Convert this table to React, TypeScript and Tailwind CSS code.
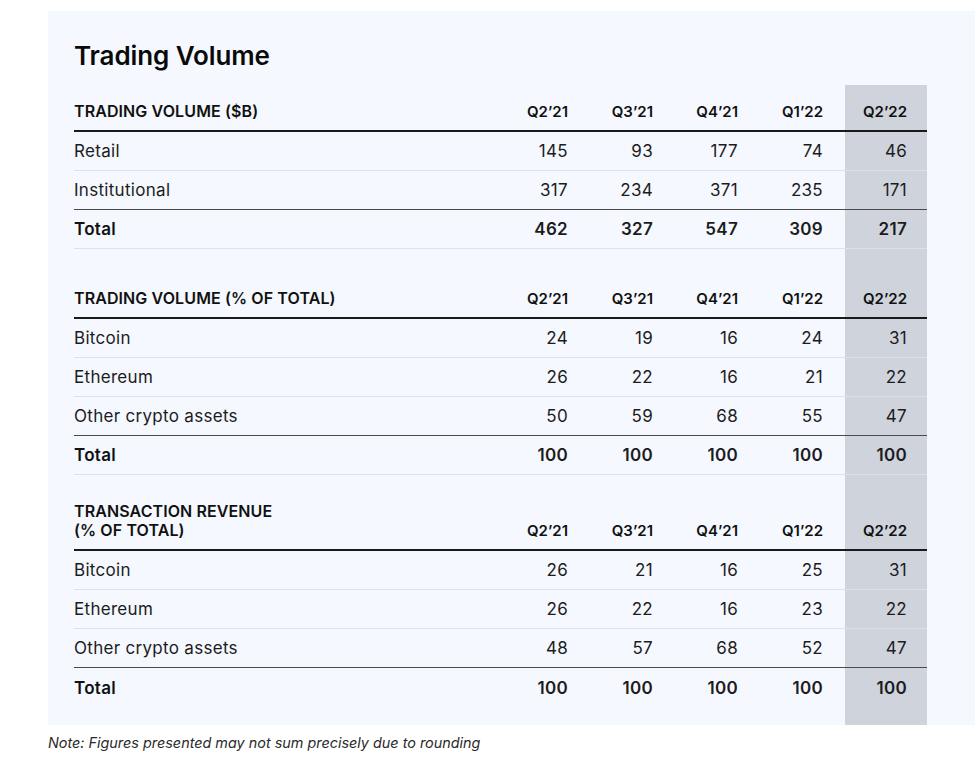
import React from 'react';

type Row = { label: string; values: string[]; total?: boolean; dark?: boolean; last?: boolean };

const quarters = ['Q2’21', 'Q3’21', 'Q4’21', 'Q1’22', 'Q2’22'];

const sections: { title: React.ReactNode; rows: Row[] }[] = [
    {
        title: 'TRADING VOLUME ($B)',
        rows: [
            { label: 'Retail', values: ['145', '93', '177', '74', '46'] },
            { label: 'Institutional', values: ['317', '234', '371', '235', '171'], dark: true },
            { label: 'Total', values: ['462', '327', '547', '309', '217'], total: true },
        ],
    },
    {
        title: 'TRADING VOLUME (% OF TOTAL)',
        rows: [
            { label: 'Bitcoin', values: ['24', '19', '16', '24', '31'] },
            { label: 'Ethereum', values: ['26', '22', '16', '21', '22'] },
            { label: 'Other crypto assets', values: ['50', '59', '68', '55', '47'], dark: true },
            { label: 'Total', values: ['100', '100', '100', '100', '100'], total: true },
        ],
    },
    {
        title: (
            <>
                TRANSACTION REVENUE
                <br />
                (% OF TOTAL)
            </>
        ),
        rows: [
            { label: 'Bitcoin', values: ['26', '21', '16', '25', '31'] },
            { label: 'Ethereum', values: ['26', '22', '16', '23', '22'] },
            { label: 'Other crypto assets', values: ['48', '57', '68', '52', '47'], dark: true },
            { label: 'Total', values: ['100', '100', '100', '100', '100'], total: true, last: true },
        ],
    },
];

function Cells({ values, bold }: { values: string[]; bold?: boolean }) {
    return (
        <>
            {values.slice(0, 4).map((v, i) => (
                <div key={i} className={`w-[85px] pt-[2px] text-right pr-[22px] ${bold ? 'font-semibold' : ''}`}>
                    {v}
                </div>
            ))}
            <div className={`w-[82px] self-stretch flex items-center justify-end pt-[2px] pr-[20px] bg-[#cfd3dc] ${bold ? 'font-semibold' : ''}`}>
                {values[4]}
            </div>
        </>
    );
}

function Spacer({ h }: { h: string }) {
    return (
        <div className={`flex ${h}`}>
            <div className="flex-1" />
            <div className="w-[82px] bg-[#cfd3dc]" />
        </div>
    );
}

export default function App() {
    return (
        <div className="w-[975px] h-[758px] bg-white font-['Inter','Liberation_Sans',sans-serif] text-[#1c1c1c]">
            <div className="pt-[11px] pl-[48px]">
                <div className="bg-[#f5f8fe] pl-[26px] pr-[48px]">
                    <h1 className="pt-[29px] h-[74px] text-[26px] leading-[32px] font-semibold text-[#0a0a0a] tracking-[-0.1px]">
                        Trading Volume
                    </h1>
                    <div className="flex flex-col text-[17px] tracking-[0.3px]">
                        {sections.map((s, si) => (
                            <React.Fragment key={si}>
                                {si === 1 && <Spacer h="h-[23px]" />}
                                {si === 2 && <Spacer h="h-[27px]" />}
                                <div className="flex items-end border-b-2 border-[#1a1a1a] text-[15px] font-semibold text-[#111] tracking-normal">
                                    <div className="flex-1 pb-[9px] leading-[19px] text-[16px] tracking-[0.1px]">{s.title}</div>
                                    {quarters.slice(0, 4).map((q) => (
                                        <div key={q} className="w-[85px] text-right pr-[22px] pb-[6px] leading-[24px]">
                                            {q}
                                        </div>
                                    ))}
                                    <div className="w-[82px] self-stretch flex items-end justify-end pr-[20px] pt-[15px] pb-[6px] leading-[24px] bg-[#cfd3dc]">
                                        {quarters[4]}
                                    </div>
                                </div>
                                {s.rows.map((r) => (
                                    <div
                                        key={r.label}
                                        className={`flex items-center h-[39px] ${
                                            r.last
                                                ? ''
                                                : r.dark
                                                ? 'border-b-[1.5px] border-[#4a4a4a]'
                                                : 'border-b border-[#dde1e8]'
                                        }`}
                                    >
                                        <div className={`flex-1 pt-[2px] ${r.total ? 'font-semibold text-[#111]' : ''}`}>{r.label}</div>
                                        <Cells values={r.values} bold={r.total} />
                                    </div>
                                ))}
                            </React.Fragment>
                        ))}
                        <Spacer h="h-[18px]" />
                    </div>
                </div>
            </div>
            <p className="pl-[48px] pt-[8px] text-[14.4px] italic text-[#2a2a2a] leading-[20px]">
                Note: Figures presented may not sum precisely due to rounding
            </p>
        </div>
    );
}
